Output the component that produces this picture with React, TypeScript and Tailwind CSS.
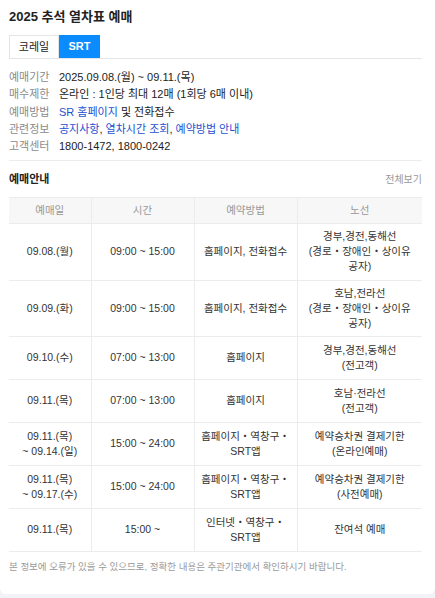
import React from 'react';

const font = { fontFamily: '"Liberation Sans", Arial, "Noto Sans CJK KR", sans-serif' };

interface Row {
  date: string[];
  time: string;
  method: string[];
  route: string[];
}

const rows: Row[] = [
  { date: ['09.08.(월)'], time: '09:00 ~ 15:00', method: ['홈페이지, 전화접수'], route: ['경부,경전,동해선', '(경로・장애인・상이유', '공자)'] },
  { date: ['09.09.(화)'], time: '09:00 ~ 15:00', method: ['홈페이지, 전화접수'], route: ['호남,전라선', '(경로・장애인・상이유', '공자)'] },
  { date: ['09.10.(수)'], time: '07:00 ~ 13:00', method: ['홈페이지'], route: ['경부,경전,동해선', '(전고객)'] },
  { date: ['09.11.(목)'], time: '07:00 ~ 13:00', method: ['홈페이지'], route: ['호남·전라선', '(전고객)'] },
  { date: ['09.11.(목)', '~ 09.14.(일)'], time: '15:00 ~ 24:00', method: ['홈페이지・역창구・', 'SRT앱'], route: ['예약승차권 결제기한', '(온라인예매)'] },
  { date: ['09.11.(목)', '~ 09.17.(수)'], time: '15:00 ~ 24:00', method: ['홈페이지・역창구・', 'SRT앱'], route: ['예약승차권 결제기한', '(사전예매)'] },
  { date: ['09.11.(목)'], time: '15:00 ~', method: ['인터넷・역창구・', 'SRT앱'], route: ['잔여석 예매'] },
];

const heights = ['h-[57px]', 'h-[56px]', 'h-[43px]', 'h-[43px]', 'h-[43px]', 'h-[43px]', 'h-[43px]'];

function Lines({ lines }: { lines: string[] }) {
  return (
    <>
      {lines.map((l, i) => (
        <div key={i}>{l}</div>
      ))}
    </>
  );
}

export default function App() {
  return (
    <div className="min-h-[598px] bg-[#f2f3f6]" style={font}>
      <div className="bg-white rounded-b-[6px] px-[9px] pt-[10px] pb-[20px] w-[435px]">
        {/* Title */}
        <h2 className="text-[13px] font-bold text-[#222] leading-[14px]">2025 추석 열차표 예매</h2>

        {/* Tabs */}
        <div className="flex mt-[11px] border-b border-[#e5e5e5] w-[413px]">
          <div className="w-[50px] h-[23px] flex items-center justify-center border border-b-0 border-[#e5e5e5] text-[11px] text-[#222]">
            코레일
          </div>
          <div className="w-[41px] h-[23px] flex items-center justify-center bg-[#0a8cff] text-[11px] font-bold text-white">
            SRT
          </div>
        </div>

        {/* Info */}
        <div className="mt-[10px] text-[11px] leading-[17.3px] w-[413px]">
          <div className="flex">
            <span className="w-[50px] text-[#8a8a8a]">예매기간</span>
            <span className="text-[#222]">2025.09.08.(월) ~ 09.11.(목)</span>
          </div>
          <div className="flex">
            <span className="w-[50px] text-[#8a8a8a]">매수제한</span>
            <span className="text-[#222]">온라인 : 1인당 최대 12매 (1회당 6매 이내)</span>
          </div>
          <div className="flex">
            <span className="w-[50px] text-[#8a8a8a]">예매방법</span>
            <span className="text-[#222]"><span className="text-[#1d4fd1]">SR 홈페이지</span> 및 전화접수</span>
          </div>
          <div className="flex">
            <span className="w-[50px] text-[#8a8a8a]">관련정보</span>
            <span className="text-[#222]">
              <span className="text-[#1d4fd1]">공지사항</span>, <span className="text-[#1d4fd1]">열차시간 조회</span>, <span className="text-[#1d4fd1]">예약방법 안내</span>
            </span>
          </div>
          <div className="flex">
            <span className="w-[50px] text-[#8a8a8a]">고객센터</span>
            <span className="text-[#222]">1800-1472, 1800-0242</span>
          </div>
        </div>

        <div className="mt-[5px] border-t border-[#ececec] w-[413px]" />

        {/* 예매안내 */}
        <div className="flex items-center justify-between w-[413px] mt-[10px]">
          <h3 className="text-[11px] font-bold text-[#222]">예매안내</h3>
          <span className="text-[10px] text-[#999]">전체보기</span>
        </div>

        <table className="mt-[9px] w-[413px] border-collapse text-[10.5px] leading-[15px] text-[#333] table-fixed">
          <colgroup>
            <col className="w-[82px]" />
            <col className="w-[103px]" />
            <col className="w-[103px]" />
            <col className="w-[125px]" />
          </colgroup>
          <thead>
            <tr className="bg-[#f7f7f7] h-[26px] text-[#999] font-normal">
              <th className="font-normal border-t border-b border-r border-[#ececec]">예매일</th>
              <th className="font-normal border border-t border-[#ececec]">시간</th>
              <th className="font-normal border border-t border-[#ececec]">예약방법</th>
              <th className="font-normal border-t border-b border-l border-[#ececec]">노선</th>
            </tr>
          </thead>
          <tbody>
            {rows.map((r, i) => (
              <tr key={i} className={`${heights[i]} text-center`}>
                <td className="border-b border-r border-[#ececec] align-middle">
                  <Lines lines={r.date} />
                </td>
                <td className="border border-t-0 border-[#ececec] align-middle">{r.time}</td>
                <td className="border border-t-0 border-[#ececec] align-middle">
                  <Lines lines={r.method} />
                </td>
                <td className="border-b border-l border-[#ececec] align-middle">
                  <Lines lines={r.route} />
                </td>
              </tr>
            ))}
          </tbody>
        </table>

        <p className="mt-[8px] text-[9.5px] text-[#9a9a9a]">
          본 정보에 오류가 있을 수 있으므로, 정확한 내용은 주관기관에서 확인하시기 바랍니다.
        </p>
      </div>
    </div>
  );
}
